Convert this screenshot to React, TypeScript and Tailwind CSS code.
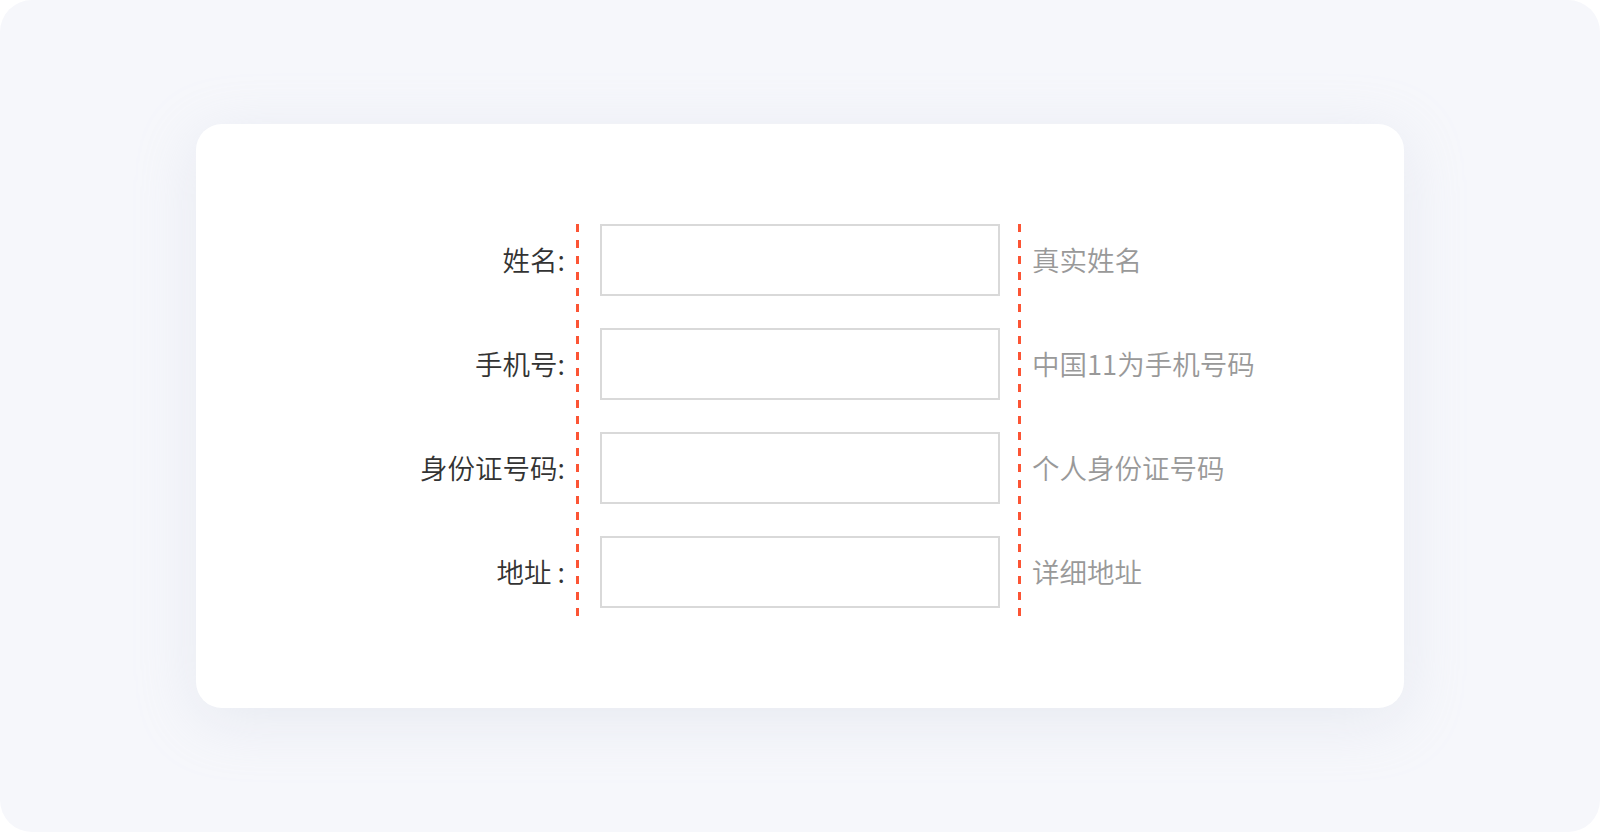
import React from 'react';

type Field = {
  label: string;
  hint: string;
};

const fields: Field[] = [
  { label: '姓名:', hint: '真实姓名' },
  { label: '手机号:', hint: '中国11为手机号码' },
  { label: '身份证号码:', hint: '个人身份证号码' },
  { label: '地址 :', hint: '详细地址' },
];

// vertical dashed guide drawn next to the inputs
function Guide() {
  return (
    <div className="w-[3px] h-[392px] shrink-0 bg-[repeating-linear-gradient(to_bottom,#fc5434_0px,#fc5434_8px,transparent_8px,transparent_16px)]" />
  );
}

export default function App() {
  return (
    <div className="w-full h-[832px] bg-white font-['Noto_Sans_CJK_SC','Noto_Sans',sans-serif]">
      <div className="h-full rounded-[32px] bg-[#f6f7fb] flex items-center justify-center">
        <div className="w-[1208px] h-[584px] rounded-[26px] bg-white shadow-[0_12px_60px_rgba(200,205,222,0.3)] pt-[100px] grid grid-cols-[1fr_400px_1fr]">
          {/* labels + left guide */}
          <div className="flex justify-end items-start pr-[21px]">
            <div className="flex flex-col gap-8 pr-[11px]">
              {fields.map((f) => (
                <div key={f.label} className="h-[72px] flex items-center justify-end text-[27.5px] font-[350] text-[#333333] leading-none">
                  {f.label}
                </div>
              ))}
            </div>
            <Guide />
          </div>

          {/* inputs */}
          <div className="flex flex-col gap-8">
            {fields.map((f) => (
              <input
                key={f.label}
                type="text"
                className="h-[72px] w-[400px] border-2 border-[#d9d9d9] bg-white outline-none px-3 text-[24px]"
              />
            ))}
          </div>

          {/* right guide + hints */}
          <div className="flex items-start pl-[18px]">
            <Guide />
            <div className="flex flex-col gap-8 pl-[11px]">
              {fields.map((f) => (
                <div key={f.hint} className="h-[72px] flex items-center text-[27.5px] font-[350] text-[#999999] leading-none">
                  {f.hint}
                </div>
              ))}
            </div>
          </div>
        </div>
      </div>
    </div>
  );
}
